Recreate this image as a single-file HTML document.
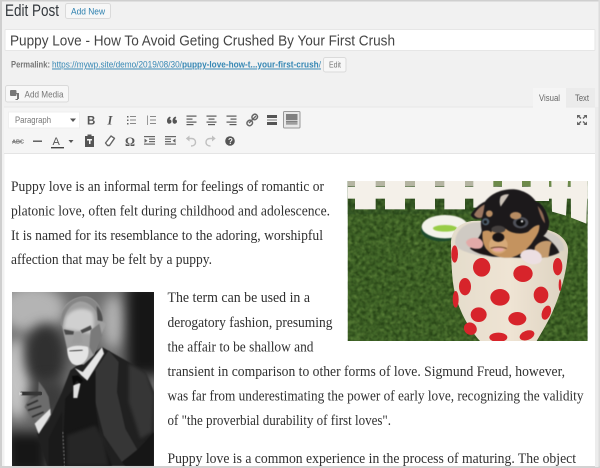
<!DOCTYPE html>
<html><head><meta charset="utf-8"><title>Edit Post</title>
<style>html,body{margin:0;padding:0;background:#f1f1f1;width:600px;height:468px;overflow:hidden}svg{display:block}
#root{filter:blur(.3px)}
.s{font-family:"Liberation Sans",sans-serif}.e{font-family:"Liberation Serif",serif;font-size:15px;fill:#303030}</style></head>
<body>
<svg id="root" width="600" height="468" viewBox="0 0 600 468" xmlns="http://www.w3.org/2000/svg">
<defs>
<filter id="b1" color-interpolation-filters="sRGB"><feGaussianBlur stdDeviation="1.600"/></filter>
<filter id="b2" x="-30%" y="-30%" width="160%" height="160%" color-interpolation-filters="sRGB"><feGaussianBlur stdDeviation="5"/></filter>
<filter id="b3" x="-60%" y="-60%" width="220%" height="220%" color-interpolation-filters="sRGB"><feGaussianBlur stdDeviation="18"/></filter>
<filter id="grass" x="0" y="0" width="100%" height="100%" color-interpolation-filters="sRGB"><feTurbulence type="fractalNoise" baseFrequency="0.09" numOctaves="3" seed="4"/><feColorMatrix values="0 0 0 0 .14  0 0 0 0 .25  0 0 0 0 .08  2.200 0 0 0 -.75"/><feGaussianBlur stdDeviation="1.200"/></filter>
<filter id="grass2" x="0" y="0" width="100%" height="100%" color-interpolation-filters="sRGB"><feTurbulence type="fractalNoise" baseFrequency="0.08" numOctaves="3" seed="11"/><feColorMatrix values="0 0 0 0 .45  0 0 0 0 .60  0 0 0 0 .28  1.600 0 0 0 -.80"/><feGaussianBlur stdDeviation="1.200"/></filter>
<clipPath id="cp"><rect x="23" y="33" width="720" height="480"/></clipPath>
<clipPath id="cf"><rect x="0" y="0" width="426" height="522"/></clipPath>
<linearGradient id="cup" x1="0" x2="1"><stop offset="0" stop-color="#e4dccb"/><stop offset=".5" stop-color="#efe4d4"/><stop offset="1" stop-color="#dcd2c0"/></linearGradient>
</defs>

<rect width="600" height="468" fill="#f1f1f1"/>
<rect width="600" height="1.500" fill="#cfcfcf"/>
<rect width="2" height="468" fill="#cfcfcf"/>
<rect x="598.500" width="1.500" height="468" fill="#dcdcdc"/>

<!-- heading -->
<text x="5" y="16" class="s" font-size="16.500" fill="#32373c" textLength="54" lengthAdjust="spacingAndGlyphs">Edit Post</text>
<rect x="65.500" y="3.500" width="45" height="15" rx="2" fill="#f7f7f7" stroke="#dadada"/>
<text x="71" y="14.500" class="s" font-size="9.500" fill="#2b7fae" textLength="34" lengthAdjust="spacingAndGlyphs">Add New</text>

<!-- title -->
<rect x="5" y="29.500" width="590" height="21" rx="1" fill="#fff" stroke="#e6e6e6"/>
<text x="10" y="45.500" class="s" font-size="15" fill="#444" textLength="385" lengthAdjust="spacingAndGlyphs">Puppy Love - How To Avoid Geting Crushed By Your First Crush</text>

<!-- permalink -->
<text x="11" y="67.500" class="s" font-size="9" font-weight="bold" fill="#777" textLength="39" lengthAdjust="spacingAndGlyphs">Permalink:</text>
<text x="52" y="67.500" class="s" font-size="9.500" fill="#3587b4" text-decoration="underline" textLength="269" lengthAdjust="spacingAndGlyphs">https://mywp.site/demo/2019/08/30/<tspan font-weight="bold">puppy-love-how-t...your-first-crush</tspan>/</text>
<rect x="323.500" y="57.500" width="22.500" height="14.500" rx="2" fill="#f7f7f7" stroke="#dadada"/>
<text x="329" y="67.500" class="s" font-size="8" fill="#777" textLength="12" lengthAdjust="spacingAndGlyphs">Edit</text>

<!-- add media -->
<rect x="5.500" y="85.500" width="63" height="16.500" rx="2" fill="#f7f7f7" stroke="#dadada"/>
<g fill="#777"><rect x="10" y="90" width="6.500" height="6" rx="1"/><path d="M13 93h6v6h-1v1h-3l1-1h1v-5h-4z"/></g>
<text x="24.500" y="97.500" class="s" font-size="9.500" fill="#777" textLength="39" lengthAdjust="spacingAndGlyphs">Add Media</text>

<!-- tabs -->
<rect x="566" y="88" width="29" height="19" fill="#ebebeb"/>
<rect x="533" y="88" width="33" height="19" fill="#f5f5f5"/>
<text x="539" y="101" class="s" font-size="9" fill="#666" textLength="21" lengthAdjust="spacingAndGlyphs">Visual</text>
<text x="575" y="101" class="s" font-size="9" fill="#666" textLength="14" lengthAdjust="spacingAndGlyphs">Text</text>

<!-- toolbar -->
<rect x="4" y="107" width="591" height="46" fill="#f5f5f5"/>
<rect x="4" y="106.500" width="529" height="1" fill="#e8e8e8"/>
<rect x="566" y="106.500" width="29" height="1" fill="#e8e8e8"/>
<rect x="4" y="153" width="591" height="1" fill="#e4e4e4"/>
<rect x="8.500" y="112" width="71" height="16" fill="#fff" stroke="#efefef"/>
<text x="15" y="123" class="s" font-size="9.500" fill="#777" textLength="36" lengthAdjust="spacingAndGlyphs">Paragraph</text>
<path d="M70 118.500h6l-3 3.500z" fill="#555"/>

<g fill="#666">
<text x="87" y="124.500" class="s" font-size="11.500" font-weight="bold" fill="#555">B</text>
<text x="107.500" y="124.500" font-family="Liberation Serif,serif" font-size="12.500" font-weight="bold" font-style="italic" fill="#555">I</text>
<!-- ul -->
<path d="M127 116h1.500v1.500h-1.500zM127 119.500h1.500v1.500h-1.500zM127 123h1.500v1.500h-1.500z"/><rect x="130" y="116" width="6" height="1" fill="#888"/><rect x="130" y="119.500" width="6" height="1" fill="#888"/><rect x="130" y="123" width="6" height="1" fill="#888"/>
<!-- ol -->
<rect x="147" y="115.500" width="1" height="9.500" fill="#999"/><rect x="150" y="116" width="6" height="1" fill="#888"/><rect x="150" y="119.500" width="6" height="1" fill="#888"/><rect x="150" y="123" width="6" height="1" fill="#888"/>
<!-- quote -->
<path d="M170 116.500c-2 .8-3 2.400-3 4.200 0 2 1 3 2.300 3s2.200-1 2.200-2.200-.8-2-2-2c.2-.6.7-1.200 1.300-1.600zM175.500 116.500c-2 .8-3 2.400-3 4.200 0 2 1 3 2.300 3s2.200-1 2.200-2.200-.8-2-2-2c.2-.6.7-1.200 1.300-1.600z" fill="#555"/>
<!-- align -->
<g fill="#5a5a5a"><rect x="186.500" y="115.500" width="10" height="1.200"/><rect x="186.500" y="118.500" width="6" height="1.200"/><rect x="186.500" y="121.500" width="10" height="1.200"/><rect x="186.500" y="124" width="7" height="1.200"/>
<rect x="206.500" y="115.500" width="10" height="1.200"/><rect x="208.500" y="118.500" width="6" height="1.200"/><rect x="206.500" y="121.500" width="10" height="1.200"/><rect x="208" y="124" width="7" height="1.200"/>
<rect x="226.500" y="115.500" width="10" height="1.200"/><rect x="230.500" y="118.500" width="6" height="1.200"/><rect x="226.500" y="121.500" width="10" height="1.200"/><rect x="229.500" y="124" width="7" height="1.200"/></g>
<!-- link -->
<path d="M249 123l7-7" stroke="#666" stroke-width="1.400"/><g fill="none" stroke="#666" stroke-width="1.500"><rect x="252" y="114.500" width="5.500" height="5" rx="2.200" transform="rotate(-45 254.700 117)"/><rect x="247" y="120.500" width="5.500" height="5" rx="2.200" transform="rotate(-45 249.700 123)"/></g>
<!-- more -->
<rect x="267" y="115" width="10" height="3" fill="#555"/><rect x="267" y="119.500" width="10" height="1" fill="#777"/><rect x="267" y="122" width="10" height="3" fill="#555"/>
<!-- kitchen sink -->
<rect x="283.500" y="111.500" width="16.500" height="16.500" rx="1" fill="#e8e8e8" stroke="#999"/>
<rect x="286" y="114" width="11.500" height="10.500" fill="#808080"/><rect x="286" y="120" width="11.500" height="1" fill="#ccc"/><rect x="286" y="122.500" width="11.500" height="1" fill="#bbb"/>

<!-- row 2 -->
<text x="12" y="143.500" class="s" font-size="5.500" font-weight="bold" fill="#666">ABC</text><rect x="12" y="141" width="10" height=".7" fill="#777"/>
<rect x="33" y="140.500" width="9" height="1.400" fill="#555"/>
<text x="52.500" y="145" class="s" font-size="11" fill="#555">A</text><rect x="51" y="147" width="13" height="1.400" fill="#444"/>
<path d="M68.500 140h5l-2.500 3z" fill="#555"/>
<!-- paste -->
<path d="M85 136h2.500v-1.500h4v1.500h2.500v11h-9z" fill="#555"/><rect x="87" y="139" width="5" height="1.500" fill="#f5f5f5"/><rect x="89" y="140" width="1.500" height="4" fill="#f5f5f5"/>
<!-- eraser -->
<path d="M105.500 143l5.500-7 3.500 2.300-5 7.200h-2z" fill="#fff" stroke="#666" stroke-width="1.400" stroke-linejoin="round"/>
<text x="125" y="146" font-family="Liberation Serif,serif" font-size="12.500" font-weight="bold" fill="#555">Ω</text>
<!-- indent -->
<g fill="#666"><rect x="144" y="136" width="11" height="1.200"/><rect x="149" y="138.500" width="6" height="1.200"/><rect x="149" y="141" width="6" height="1.200"/><rect x="144" y="143.500" width="11" height="1.200"/><path d="M144.500 138.500l3 2.200-3 2.200z"/>
<rect x="165" y="136" width="11" height="1.200"/><rect x="165" y="138.500" width="6" height="1.200"/><rect x="165" y="141" width="6" height="1.200"/><rect x="165" y="143.500" width="11" height="1.200"/><path d="M175.500 138.500l-3 2.200 3 2.200z"/></g>
<!-- undo redo -->
<path d="M187 138.500h4.500c2.500 0 4 1.500 4 3.800s-1.800 3.700-4.500 3.700" fill="none" stroke="#c0c0c0" stroke-width="1.400"/><path d="M189.500 135.500v6l-3.700-3z" fill="#c0c0c0"/>
<path d="M214.500 138.500h-4.500c-2.500 0-4 1.500-4 3.800s1.800 3.700 4.500 3.700" fill="none" stroke="#c0c0c0" stroke-width="1.400"/><path d="M212 135.500v6l3.700-3z" fill="#c0c0c0"/>
<circle cx="230" cy="141" r="4.800" fill="#555"/><text x="228" y="144.200" class="s" font-size="8" font-weight="bold" fill="#f5f5f5">?</text>
<!-- fullscreen -->
<g fill="#666"><path d="M577 115h3.500l-1 1 2 2-1 1-2-2-1.500 1.500zM587 115h-3.500l1 1-2 2 1 1 2-2 1.500 1.500zM577 125h3.500l-1-1 2-2-1-1-2 2-1.500-1.500zM587 125h-3.500l1-1-2-2 1-1 2 2 1.500-1.500z"/></g>
</g>

<!-- editor body -->
<rect x="4.500" y="154" width="590.500" height="312" fill="#fff"/>
<rect x="0" y="466" width="600" height="2" fill="#d2d2d2"/>
<rect x="595" y="107" width="3.500" height="360" fill="#ececec"/>

<text x="11" y="191" class="e" textLength="313" lengthAdjust="spacingAndGlyphs">Puppy love is an informal term for feelings of romantic or</text>
<text x="11" y="215.500" class="e" textLength="319" lengthAdjust="spacingAndGlyphs">platonic love, often felt during childhood and adolescence.</text>
<text x="11" y="240" class="e" textLength="312" lengthAdjust="spacingAndGlyphs">It is named for its resemblance to the adoring, worshipful</text>
<text x="11" y="264" class="e" textLength="201" lengthAdjust="spacingAndGlyphs">affection that may be felt by a puppy.</text>
<text x="167.500" y="302" class="e" textLength="142.500" lengthAdjust="spacingAndGlyphs">The term can be used in a</text>
<text x="167.500" y="327" class="e" textLength="165" lengthAdjust="spacingAndGlyphs">derogatory fashion, presuming</text>
<text x="167.500" y="351.500" class="e" textLength="146" lengthAdjust="spacingAndGlyphs">the affair to be shallow and</text>
<text x="167.500" y="376" class="e" textLength="397.500" lengthAdjust="spacingAndGlyphs">transient in comparison to other forms of love. Sigmund Freud, however,</text>
<text x="167.500" y="400.500" class="e" textLength="416" lengthAdjust="spacingAndGlyphs">was far from underestimating the power of early love, recognizing the validity</text>
<text x="167.500" y="425" class="e" textLength="223.500" lengthAdjust="spacingAndGlyphs">of "the proverbial durability of first loves".</text>
<text x="167.500" y="463" class="e" textLength="408.500" lengthAdjust="spacingAndGlyphs">Puppy love is a common experience in the process of maturing. The object</text>

<!-- puppy photo -->
<svg x="340" y="170" width="260" height="180" viewBox="0 0 780 540">
<g clip-path="url(#cp)">
<rect x="23" y="33" width="720" height="480" fill="#44692a"/>
<rect x="23" y="33" width="720" height="100" fill="#365926"/>
<rect x="23" y="33" width="720" height="480" filter="url(#grass)"/>
<rect x="23" y="33" width="720" height="480" filter="url(#grass2)"/>
<g fill="#f4f0e9">
<rect x="23" y="33" width="400" height="15" fill="#b5b5a2"/>
<rect x="423" y="33" width="320" height="15" fill="#6d8a4a"/>
<rect x="23" y="50" width="720" height="36"/>
<rect x="45" y="33" width="62" height="85"/><rect x="135" y="33" width="60" height="85"/><rect x="225" y="33" width="60" height="85"/><rect x="313" y="33" width="62" height="85"/><rect x="400" y="33" width="60" height="80"/><rect x="486" y="33" width="60" height="50"/><rect x="572" y="33" width="55" height="60"/>
<path d="M634 33h50l-6 104-42-12zM692 33h51l-4 128-46-18z"/>
</g>
<ellipse cx="305" cy="180" rx="62" ry="34" fill="#1d4a2c" filter="url(#b1)"/>
<ellipse cx="315" cy="170" rx="70" ry="35" fill="#f3f2ea" filter="url(#b1)"/>
<ellipse cx="315" cy="175" rx="36" ry="10" fill="#97cc46" filter="url(#b1)"/>

<!-- cup: outer body -->
<path d="M333 222C332 190 350 160 395 153 470 148 600 165 650 190 675 205 686 225 684 245 680 320 650 410 615 470L590 513H420C390 480 352 420 340 345 334 300 333 250 333 222Z" fill="url(#cup)"/>
<!-- cup inner wall -->
<path d="M345 222C345 188 365 165 398 158 450 152 600 170 645 195 665 208 674 225 672 240 600 268 440 268 400 252 370 245 350 235 345 222Z" fill="#cfcac3" filter="url(#b1)"/>

<!-- puppy -->
<g transform="translate(330 30)" filter="url(#b1)">
<path d="M62 105C70 90 88 72 105 65 125 38 160 26 195 28 225 32 248 48 258 65 275 68 290 90 298 125 298 145 290 160 280 168 300 178 322 200 328 218 310 228 285 232 262 235L130 230C105 226 75 215 60 205 80 180 95 165 95 150 92 135 92 125 95 115 85 118 70 120 62 105Z" fill="#1c191b"/>
<path d="M72 104C78 92 90 80 104 73 102 88 100 100 96 112 88 116 78 114 72 104Z" fill="#9b7660"/>
<path d="M263 78C275 90 284 108 285 130 275 120 268 100 263 78Z" fill="#8f6a54"/>
<path d="M152 50C158 44 168 42 177 43 170 55 160 68 152 80 148 70 148 60 152 50Z" fill="#cbc2b8"/>
<path d="M98 155C108 150 118 150 124 158 122 145 165 140 172 150 185 160 215 165 235 155 245 145 255 135 268 135 270 155 258 170 250 182 240 200 215 225 185 232 160 236 130 228 115 214 100 200 95 175 98 155Z" fill="#c4935f"/>
<ellipse cx="145" cy="195" rx="28" ry="26" fill="#d6a978"/>
<ellipse cx="145" cy="148" rx="21" ry="11" fill="#45403f"/>
<ellipse cx="145" cy="172" rx="18" ry="14" fill="#1a1516"/>
<ellipse cx="145" cy="209" rx="17" ry="6" fill="#e5a7a3"/>
<path d="M122 205C135 200 160 200 170 206" stroke="#6a4030" stroke-width="3" fill="none"/>
<ellipse cx="212" cy="128" rx="23" ry="17" fill="#4e5058"/>
<ellipse cx="212" cy="128" rx="14" ry="11" fill="#0f0f10"/>
<circle cx="216" cy="124" r="3.500" fill="#e4e4e4"/>
<ellipse cx="107" cy="125" rx="11" ry="11" fill="#4c5c6a"/>
<circle cx="106" cy="126" r="5" fill="#151515"/>
<ellipse cx="118" cy="101" rx="10" ry="10" fill="#b78c62"/>
<ellipse cx="197" cy="107" rx="17" ry="11" fill="#b78c62"/>
<path d="M255 200C270 180 298 178 305 188 298 200 300 215 295 232L250 232Z" fill="#c49a6c"/>
<path d="M48 186C55 172 80 170 92 178 104 190 100 202 88 206 70 208 50 202 48 186Z" fill="#e2aaa8"/>
<path d="M60 205C80 210 100 205 110 208L130 228 100 224C85 220 70 214 60 205Z" fill="#1c1416"/>
<path d="M210 228C212 212 232 203 255 210 275 218 282 235 270 248 250 258 225 252 210 228Z" fill="#ecdfe2"/>
</g>
<!-- dots -->
<g fill="#d7242b">
<ellipse cx="344" cy="252" rx="10" ry="26"/><ellipse cx="425" cy="292" rx="26" ry="28"/><ellipse cx="549" cy="311" rx="29" ry="25"/><ellipse cx="653" cy="290" rx="14" ry="26"/><ellipse cx="375" cy="350" rx="18" ry="26"/><ellipse cx="480" cy="382" rx="29" ry="25"/><ellipse cx="603" cy="375" rx="22" ry="25"/><ellipse cx="347" cy="388" rx="9" ry="25"/><ellipse cx="416" cy="434" rx="24" ry="22"/><ellipse cx="532" cy="446" rx="27" ry="20"/><ellipse cx="619" cy="428" rx="13" ry="22" transform="rotate(20 619 428)"/><ellipse cx="391" cy="476" rx="20" ry="18" transform="rotate(35 391 476)"/><ellipse cx="475" cy="502" rx="27" ry="14"/><ellipse cx="561" cy="496" rx="23" ry="14" transform="rotate(-20 561 496)"/><ellipse cx="660" cy="345" rx="4" ry="18"/>
</g>
</g>
</svg>

<!-- Freud photo -->
<svg x="12" y="292" width="142" height="174" viewBox="0 0 426 522">
<g clip-path="url(#cf)">
<rect width="426" height="522" fill="#6e6e6e"/>
<ellipse cx="60" cy="50" rx="100" ry="70" fill="#b4b4b4" filter="url(#b3)"/>
<ellipse cx="15" cy="260" rx="45" ry="120" fill="#c4c4c4" filter="url(#b3)"/>
<ellipse cx="100" cy="190" rx="62" ry="95" fill="#303030" filter="url(#b3)"/>
<ellipse cx="305" cy="90" rx="35" ry="80" fill="#b0b0b0" filter="url(#b3)"/>
<rect x="345" y="-30" width="110" height="280" fill="#161616" filter="url(#b3)"/>
<rect x="-20" y="420" width="130" height="130" fill="#161616" filter="url(#b3)"/>
<ellipse cx="110" cy="320" rx="60" ry="60" fill="#3c3c3c" filter="url(#b3)"/>

<!-- jacket -->
<path d="M75 425L110 385 150 300 175 235 270 165 350 210 400 240 426 300V522H105Z" fill="#202020" filter="url(#b1)"/>
<path d="M350 215L405 245 426 310 420 420 385 440 350 330Z" fill="#363636" filter="url(#b2)"/>
<path d="M250 235L290 175 320 210 315 300 340 410 380 480 330 510 275 430 250 330Z" fill="#363636" filter="url(#b1)"/>
<path d="M160 320L195 280 250 235 250 340 262 420 300 522H150Z" fill="#161616" filter="url(#b1)"/>
<path d="M165 430L250 400 275 440 290 522H165Z" fill="#262626" filter="url(#b2)"/>
<path d="M152 420L158 522" stroke="#888" stroke-width="3" stroke-dasharray="6 5" filter="url(#b1)"/>
<path d="M110 440L150 360 150 522H110Z" fill="#1a1a1a" filter="url(#b1)"/>
<path d="M330 510L380 470 426 420V522H340Z" fill="#161616" filter="url(#b1)"/>

<!-- shirt, tie -->
<path d="M188 228L212 240 270 165 276 185 226 266 208 250Z" fill="#e6e6e6" filter="url(#b1)"/>
<path d="M184 280L206 272 196 318 184 318Z" fill="#e0e0e0" filter="url(#b1)"/>
<path d="M180 252L198 250 214 264 206 276 195 266 184 280Z" fill="#0a0a0a" filter="url(#b1)"/>

<!-- head -->
<path d="M146 75C150 35 190 10 225 14 255 22 272 50 274 90L283 95 272 118 258 150 245 190 215 218 180 215 165 170 155 125Z" fill="#a0a0a0" filter="url(#b1)"/>
<path d="M160 80C170 55 210 40 240 60 250 80 245 110 240 125L155 110Z" fill="#d0d0d0" filter="url(#b2)"/>
<path d="M146 100C142 60 165 22 212 14 250 16 270 45 274 85L262 85C258 60 240 30 205 28 175 32 155 65 152 100Z" fill="#868686" filter="url(#b1)"/>
<path d="M254 42C265 52 272 70 272 88L257 85Z" fill="#4e4e4e" filter="url(#b1)"/>
<path d="M155 112L186 118 184 128 160 128ZM205 115L236 100 240 112 210 124Z" fill="#4a4a4a" filter="url(#b1)"/>
<path d="M190 120L206 118 212 152 180 155Z" fill="#9c9c9c" filter="url(#b1)"/>
<path d="M236 115L262 95 270 130 245 190 232 165Z" fill="#7a7a7a" filter="url(#b1)"/>
<path d="M166 170C180 158 215 160 228 165 235 190 220 218 195 220 175 218 165 195 166 170Z" fill="#e4e4e4" filter="url(#b1)"/>
<path d="M172 178L212 174" stroke="#4a4a4a" stroke-width="4" filter="url(#b1)"/>

<!-- hand, cigar -->
<path d="M38 345C45 325 60 318 78 312L80 268 98 292 110 315 115 350 105 385 78 392 55 372Z" fill="#6c6c6c" filter="url(#b1)"/>
<path d="M45 340L78 325M48 355L88 342M60 375L95 360" stroke="#2e2e2e" stroke-width="5" filter="url(#b1)"/>
<rect x="24" y="299" width="66" height="11" rx="4" fill="#353535"/>
<rect x="22" y="301" width="8" height="8" fill="#e4e4e4" filter="url(#b1)"/>
<path d="M68 395L115 350 116 368 80 426Z" fill="#e2e2e2" filter="url(#b1)"/>
</g>
</svg>
</svg>
</body></html>
